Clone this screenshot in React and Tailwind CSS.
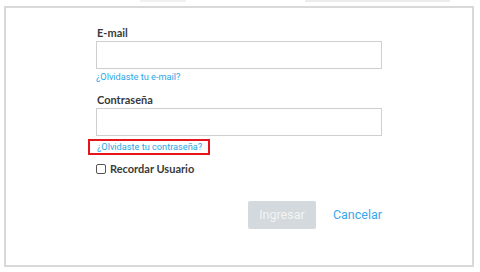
import React from "react";

const LoginForm = () => {
  return (
    <div className="w-[480px] h-[272px] bg-white relative overflow-hidden">
      {/* faint remnants of the page header above the panel */}
      <div className="absolute top-0 left-[140px] w-[46px] h-[2px] bg-[#f0f0f0]" />
      <div className="absolute top-0 left-[305px] w-[145px] h-[2px] bg-[#ececec]" />

      <div className="pt-[6px] px-[4px]">
        <div className="w-[470px] h-[261px] border-2 border-[#d9d9d9] bg-white">
          <form
            className="w-[286px] ml-[90px] pt-[18px] flex flex-col"
            style={{ fontFamily: "Lato, 'Liberation Sans', sans-serif" }}
            onSubmit={(e) => e.preventDefault()}
          >
            <label className="text-[11px] leading-[14px] font-bold text-[#3a3a3a] pl-[1px]">
              E-mail
            </label>
            <input
              type="text"
              className="mt-[1px] h-[28px] w-full border-[1.5px] border-[#cfcfcf] bg-white outline-none"
            />
            <span className="mt-[2px] text-[9.2px] leading-[12px] text-[#2aa6e6] font-['Roboto',sans-serif] cursor-pointer">
              ¿Olvidaste tu e-mail?
            </span>

            <label className="mt-[10px] text-[11px] leading-[14px] font-bold text-[#3a3a3a] pl-[1px]">
              Contraseña
            </label>
            <input
              type="password"
              className="mt-[1px] h-[28px] w-full border-[1.5px] border-[#cfcfcf] bg-white outline-none"
            />
            <div className="mt-[3px] -ml-[8px] w-[122px] h-[16px] border-2 border-[#e8141b] flex items-center pl-[7px]">
              <span className="text-[9.2px] leading-[12px] text-[#2aa6e6] font-['Roboto',sans-serif] whitespace-nowrap cursor-pointer">
                ¿Olvidaste tu contraseña?
              </span>
            </div>

            <label className="mt-[7px] flex items-center gap-[4px] h-[14px]">
              <span className="w-[10px] h-[10px] border border-[#555] rounded-[2px] bg-white" />
              <span className="text-[11px] leading-[14px] font-bold text-[#3a3a3a]">
                Recordar Usuario
              </span>
            </label>

            <div className="mt-[25px] flex items-center justify-end gap-[17px]">
              <button
                type="submit"
                className="w-[68px] h-[28px] rounded-[2px] bg-[#d3d9dd] text-[#f2f4f5] text-[12.5px] font-['Roboto',sans-serif]"
              >
                Ingresar
              </button>
              <button
                type="button"
                className="text-[12.5px] text-[#3aa6ea] font-['Roboto',sans-serif]"
              >
                Cancelar
              </button>
            </div>
          </form>
        </div>
      </div>
    </div>
  );
};

export default function App() {
  return <LoginForm />;
}
